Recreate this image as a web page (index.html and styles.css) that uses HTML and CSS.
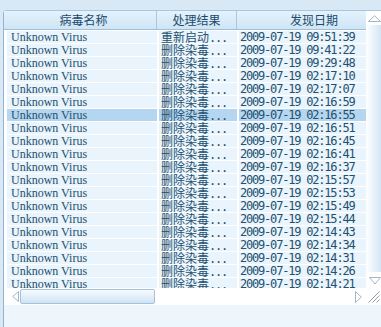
FILE: index.html
```html
<!DOCTYPE html>
<html>
<head>
<meta charset="utf-8">
<link rel="stylesheet" href="styles.css">
</head>
<body>
<div class="frame">
  <div class="view">
    <div class="listarea">
      <div class="header">
        <div class="hc c1">病毒名称</div>
        <div class="hc c2">处理结果</div>
        <div class="hc c3">发现日期</div>
      </div>
      <div class="rows">
        <div class="row"><div class="c c1 lat">Unknown Virus</div><div class="c c2">重新启动<span class="dots">...</span></div><div class="c c3 num">2009-07-19 09:51:39</div></div>
        <div class="row"><div class="c c1 lat">Unknown Virus</div><div class="c c2">删除染毒<span class="dots">...</span></div><div class="c c3 num">2009-07-19 09:41:22</div></div>
        <div class="row"><div class="c c1 lat">Unknown Virus</div><div class="c c2">删除染毒<span class="dots">...</span></div><div class="c c3 num">2009-07-19 09:29:48</div></div>
        <div class="row"><div class="c c1 lat">Unknown Virus</div><div class="c c2">删除染毒<span class="dots">...</span></div><div class="c c3 num">2009-07-19 02:17:10</div></div>
        <div class="row"><div class="c c1 lat">Unknown Virus</div><div class="c c2">删除染毒<span class="dots">...</span></div><div class="c c3 num">2009-07-19 02:17:07</div></div>
        <div class="row"><div class="c c1 lat">Unknown Virus</div><div class="c c2">删除染毒<span class="dots">...</span></div><div class="c c3 num">2009-07-19 02:16:59</div></div>
        <div class="row sel"><div class="c c1 lat">Unknown Virus</div><div class="c c2">删除染毒<span class="dots">...</span></div><div class="c c3 num">2009-07-19 02:16:55</div></div>
        <div class="row"><div class="c c1 lat">Unknown Virus</div><div class="c c2">删除染毒<span class="dots">...</span></div><div class="c c3 num">2009-07-19 02:16:51</div></div>
        <div class="row"><div class="c c1 lat">Unknown Virus</div><div class="c c2">删除染毒<span class="dots">...</span></div><div class="c c3 num">2009-07-19 02:16:45</div></div>
        <div class="row"><div class="c c1 lat">Unknown Virus</div><div class="c c2">删除染毒<span class="dots">...</span></div><div class="c c3 num">2009-07-19 02:16:41</div></div>
        <div class="row"><div class="c c1 lat">Unknown Virus</div><div class="c c2">删除染毒<span class="dots">...</span></div><div class="c c3 num">2009-07-19 02:16:37</div></div>
        <div class="row"><div class="c c1 lat">Unknown Virus</div><div class="c c2">删除染毒<span class="dots">...</span></div><div class="c c3 num">2009-07-19 02:15:57</div></div>
        <div class="row"><div class="c c1 lat">Unknown Virus</div><div class="c c2">删除染毒<span class="dots">...</span></div><div class="c c3 num">2009-07-19 02:15:53</div></div>
        <div class="row"><div class="c c1 lat">Unknown Virus</div><div class="c c2">删除染毒<span class="dots">...</span></div><div class="c c3 num">2009-07-19 02:15:49</div></div>
        <div class="row"><div class="c c1 lat">Unknown Virus</div><div class="c c2">删除染毒<span class="dots">...</span></div><div class="c c3 num">2009-07-19 02:15:44</div></div>
        <div class="row"><div class="c c1 lat">Unknown Virus</div><div class="c c2">删除染毒<span class="dots">...</span></div><div class="c c3 num">2009-07-19 02:14:43</div></div>
        <div class="row"><div class="c c1 lat">Unknown Virus</div><div class="c c2">删除染毒<span class="dots">...</span></div><div class="c c3 num">2009-07-19 02:14:34</div></div>
        <div class="row"><div class="c c1 lat">Unknown Virus</div><div class="c c2">删除染毒<span class="dots">...</span></div><div class="c c3 num">2009-07-19 02:14:31</div></div>
        <div class="row"><div class="c c1 lat">Unknown Virus</div><div class="c c2">删除染毒<span class="dots">...</span></div><div class="c c3 num">2009-07-19 02:14:26</div></div>
        <div class="row"><div class="c c1 lat">Unknown Virus</div><div class="c c2">删除染毒<span class="dots">...</span></div><div class="c c3 num">2009-07-19 02:14:21</div></div>
      </div>
    </div>
    <div class="vscroll">
      <svg class="arrow-up" width="13" height="7" viewBox="0 0 13 7"><path d="M0.5 6.5 L6.5 0.7 L12.5 6.5 Z" fill="none" stroke="#a3b6c8" stroke-width="1"/></svg>
      <div class="vthumb"></div>
      <svg class="arrow-down" width="12" height="8" viewBox="0 0 12 8"><path d="M0.5 0.5 L6 7 L11.5 0.5 Z" fill="none" stroke="#a3b6c8" stroke-width="1"/></svg>
    </div>
    <div class="hscroll">
      <svg class="arrow-left" width="7" height="11" viewBox="0 0 7 11"><path d="M6.5 0.5 L0.7 5.5 L6.5 10.5 Z" fill="none" stroke="#a3b6c8" stroke-width="1"/></svg>
      <div class="hthumb"></div>
      <svg class="arrow-right" width="7" height="12" viewBox="0 0 7 12"><path d="M0.5 0.5 L6.3 6 L0.5 11.5 Z" fill="none" stroke="#a3b6c8" stroke-width="1"/></svg>
    </div>
    <div class="grip">
      <svg width="12" height="12" viewBox="0 0 12 12"><path d="M0.5 11.5 L11.5 0.5 M4.5 11.5 L11.5 4.5 M8.5 11.5 L11.5 8.5" stroke="#8f9fae" stroke-width="1"/></svg>
    </div>
  </div>
</div>
</body>
</html>
```

FILE: styles.css
```css
html, body {
  margin: 0;
  padding: 0;
}
body {
  width: 381px;
  height: 327px;
  overflow: hidden;
  background: #d9e8f5;
  font-family: "Noto Sans CJK SC", "Liberation Sans", sans-serif;
}
.frame {
  margin: 10px 0 0 3px;
  height: 317px;
  border-left: 1px solid #93b5d4;
  border-top: 1px solid #a7c6e1;
  border-top-left-radius: 4px;
  background: #eef6fd;
  box-sizing: border-box;
}
.view {
  display: grid;
  grid-template-columns: 362px 15px;
  grid-template-rows: 277px 17px;
  background: #fff;
}
.listarea {
  overflow: hidden;
  background: #fff;
}
.header {
  display: flex;
  height: 19px;
  box-sizing: border-box;
  border-bottom: 1px solid #9dbfdc;
  background: linear-gradient(#e4f2fc, #cfe5f5);
  width: 400px;
}
.hc {
  flex: none;
  height: 18px;
  line-height: 18px;
  font-size: 12px;
  color: #1d4a6a;
  text-align: center;
  box-sizing: border-box;
  border-right: 1px solid #a9c8e0;
}
.header .c1 { width: 153px; padding-left: 7px; }
.header .c2 { width: 80px; }
.header .c3 { width: 155px; }
.rows {
  padding: 1px 0 0 3px;
}
.row {
  display: flex;
  height: 12px;
  margin-bottom: 1px;
}
.c {
  flex: none;
  height: 12px;
  line-height: 12px;
  font-size: 12px;
  color: #24506e;
  background: #e9f4fc;
  white-space: nowrap;
}
.row.sel .c {
  background: #b4d6f0;
}
.row .c1 { width: 150px; margin-right: 2px; padding-left: 4px; box-sizing: border-box; }
.row .c2 { width: 78px; margin-right: 2px; padding-left: 2px; box-sizing: border-box; }
.row .c3 { width: 160px; padding-left: 1px; box-sizing: border-box; }
.lat {
  font-family: "Liberation Serif", "DejaVu Serif", serif;
  font-size: 12px;
}
.dots {
  font-family: "DejaVu Sans Mono", monospace;
  letter-spacing: -1.2px;
}
.num {
  font-family: "DejaVu Sans Mono", monospace;
  letter-spacing: -1.2px;
}
.vscroll {
  display: flex;
  flex-direction: column;
  align-items: center;
  background: #fff;
}
.arrow-up {
  margin-top: 4px;
  margin-left: 1px;
}
.vthumb {
  align-self: stretch;
  margin-top: 3px;
  height: 247px;
  background: linear-gradient(90deg, #ffffff, #d3e6f5);
}
.arrow-down {
  margin-top: 5px;
  margin-left: 2px;
}
.hscroll {
  display: flex;
  align-items: center;
  background: #fff;
  height: 17px;
}
.arrow-left {
  margin-left: 8px;
}
.hthumb {
  margin-left: 1px;
  width: 135px;
  height: 15px;
  box-sizing: border-box;
  border: 1px solid #a6c2da;
  border-radius: 2px;
  background: linear-gradient(#f7fbfe, #cfe3f3);
}
.arrow-right {
  margin-left: 200px;
}
.grip {
  display: flex;
  align-items: center;
  justify-content: flex-end;
  background: #fff;
}
.grip svg {
  margin-right: 1px;
}
```
